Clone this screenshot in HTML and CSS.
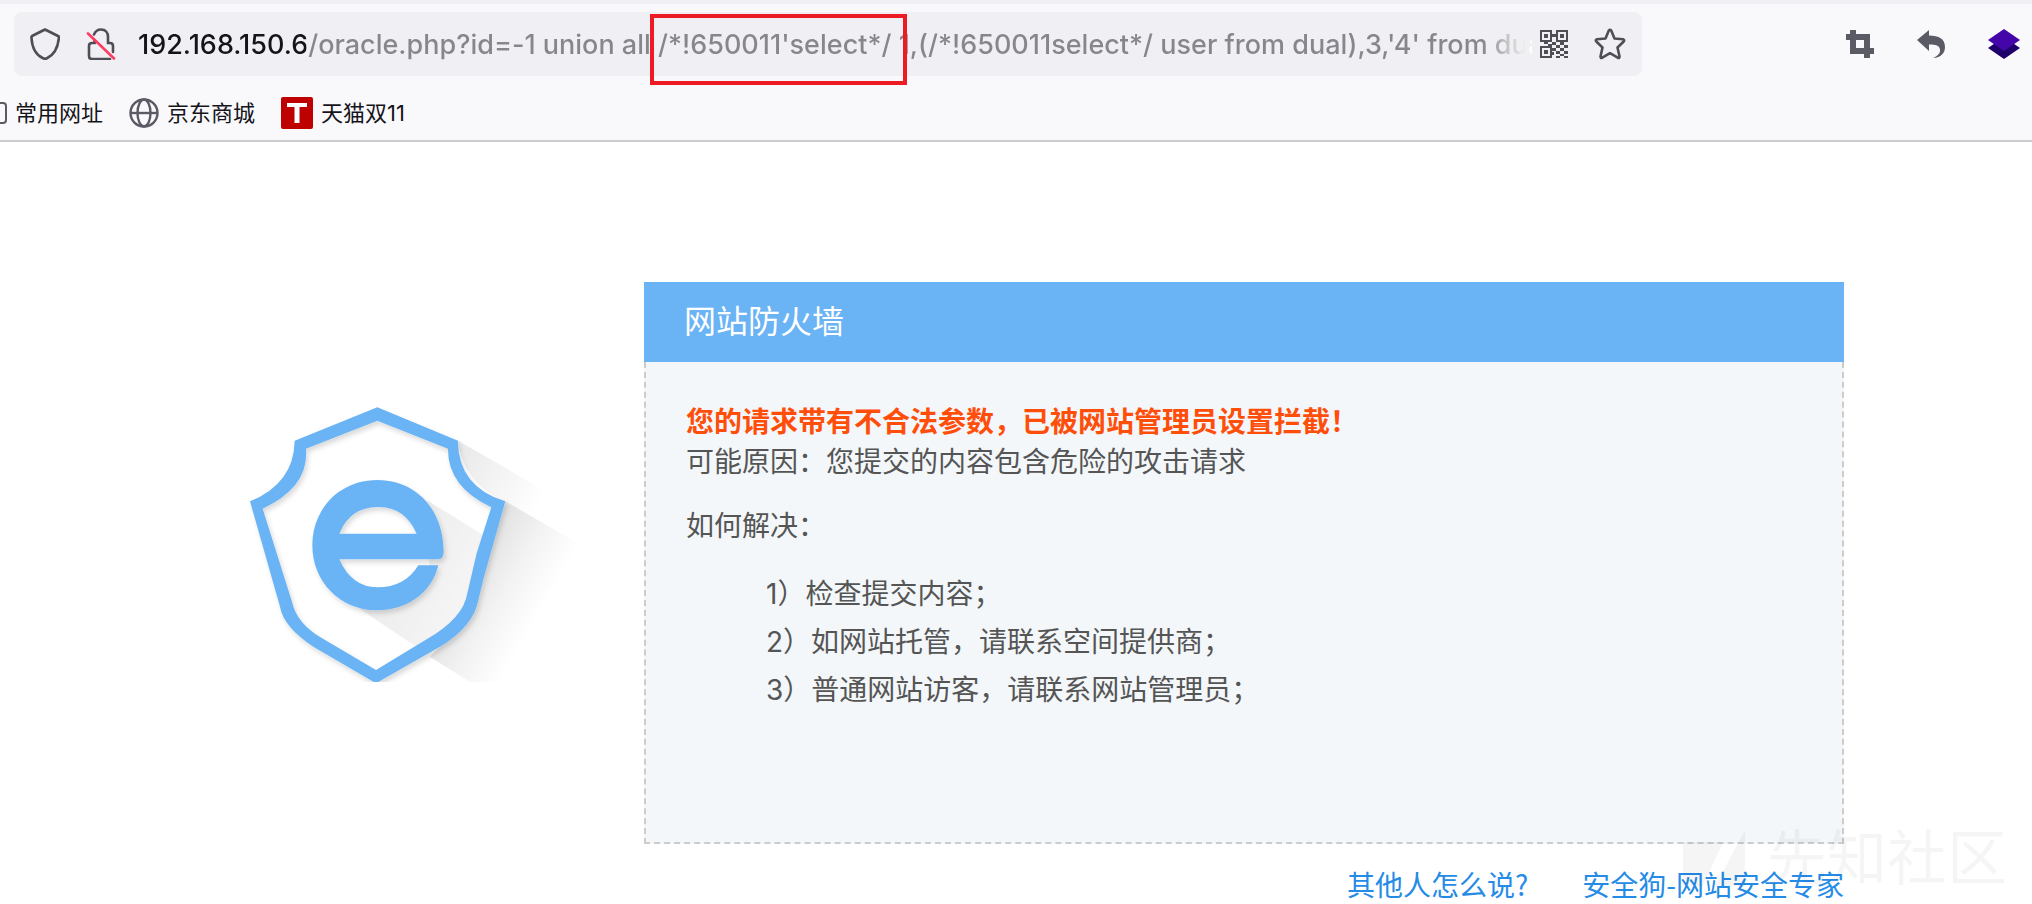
FILE: index.html
```html
<!DOCTYPE html>
<html lang="zh-CN">
<head>
    <meta charset="UTF-8">
    <meta name="viewport" content="width=device-width, initial-scale=1.0">
    <title>网站防火墙</title>
    <link rel="stylesheet" href="styles.css">
</head>
<body>
<header class="browser">
    <div class="toolbar">
        <div class="urlbar">
            <button class="icon-btn shield-btn" aria-label="Tracking protection">
                <svg width="30" height="32" viewBox="0 0 30 32" fill="none" stroke="#4f4e56" stroke-width="2.6" stroke-linejoin="round">
                    <path d="M15 1.5L28 8c1 0 .9 1 .9 2C28 19 24 27 17 30.300q-2 .9-4 0C6 27 2 19 1.500 10c0-1-.1-2 .5-2z"/>
                </svg>
            </button>
            <button class="icon-btn lock-btn" aria-label="Connection not secure">
                <svg width="30" height="32" viewBox="0 0 30 32" fill="none" stroke="#4f4e56" stroke-width="2.600" stroke-linecap="round">
                    <path d="M8 6.500C9.500 3 12 1.500 15 1.500c4.500 0 7 3 7 7.500v6h2c2 0 3 1 3 3v6M9 15H6c-2 0-3 1-3 3v10c0 2 1 3 3 3h18M8.500 12v3"/>
                    <path stroke="#ff3b62" d="M2 5.500l26 25"/>
                </svg>
            </button>
            <div class="url-field">
                <input type="text" class="url" aria-label="Address" value="192.168.150.6/oracle.php?id=-1 union all /*!650011'select*/ 1,(/*!650011select*/ user from dual),3,'4' from dual">
                <span class="highlight"></span>
            </div>
            <button class="icon-btn qr-btn" aria-label="QR code">
                <svg width="28" height="28" viewBox="0 0 28 28" fill="#4f4e56">
                    <path fill-rule="evenodd" d="M0 0h12v12H0zM2 2v8h8V2zM16 0h12v12H16zM18 2v8h8V2zM0 16h12v12H0zM2 18v8h8v-8z"/>
                    <path d="M4 4h4v4H4zM20 4h4v4h-4zM4 20h4v4H4zM12 4h4v3h-4zM4 12h4v2H4zM8 14h4v2H8zM12 12h4v3h-4zM16 15h4v3h-4zM20 12h4v3h-4zM24 15h4v3h-4zM12 18h4v3h-4zM20 18h4v3h-4zM16 21h4v3h-4zM24 21h4v3h-4zM12 22h2v3h-2zM16 26h4v2h-4zM20 24h4v2h-4zM24 26h4v2h-4z"/>
                </svg>
            </button>
            <button class="icon-btn star-btn" aria-label="Bookmark">
                <svg width="32" height="32" viewBox="0 0 32 32" fill="none" stroke="#4f4e56" stroke-width="2.6" stroke-linejoin="round">
                    <path d="M14.800 2.500q1.200-1.600 2.400 0L20.500 10.500l8.500.8q2 .6.700 2.200L23.500 19.500l2 9q0 2-1.800 1.200L16 25.200l-7.700 4.500q-1.800.8-1.800-1.200l2-9L2.300 13.500q-1.300-1.600.7-2.200l8.500-.8z"/>
                </svg>
            </button>
        </div>
        <div class="extensions">
            <button class="icon-btn" aria-label="Screenshot">
                <svg width="28" height="28" viewBox="0 0 28 28" fill="#5b5b66">
                    <path fill-rule="evenodd" d="M4 0h6v4h14v14h4v6h-4v4h-6v-4H4V10H0V4h4zM10 10v8h8v-8z"/>
                </svg>
            </button>
            <button class="icon-btn" aria-label="Undo">
                <svg width="28" height="28" viewBox="0 0 28 28" fill="#5b5b66">
                    <path d="M0 10L12 0v5.500C22 5.500 28 9 28 17c0 6-4 10.500-12 11 5-2 7.500-5 7-8.500-.6-4-4-5-11-5V21z"/>
                </svg>
            </button>
            <button class="icon-btn" aria-label="Layers">
                <svg width="32" height="30" viewBox="0 0 32 30">
                    <path fill="#20006b" d="M0 19L16 8l16 11-16 11z"/>
                    <path fill="#4406a8" d="M0 11L16 0l16 11-16 11z"/>
                </svg>
            </button>
        </div>
    </div>
    <nav class="bookmarks">
        <a href="#" class="bookmark">
            <svg width="7" height="24" viewBox="0 0 7 24" fill="none" stroke="#5b5b66" stroke-width="2">
                <path d="M0 2h3q3 0 3 3v14q0 3-3 3H0"/>
            </svg>
            常用网址
        </a>
        <a href="#" class="bookmark">
            <svg width="30" height="30" viewBox="0 0 30 30" fill="none" stroke="#5b5b66" stroke-width="2.400">
                <circle cx="15" cy="15" r="13.500"/>
                <ellipse cx="15" cy="15" rx="6.500" ry="13.500"/>
                <path d="M1 15h28"/>
            </svg>
            京东商城
        </a>
        <a href="#" class="bookmark">
            <svg width="32" height="32" viewBox="0 0 32 32">
                <rect width="32" height="32" rx="2" fill="#bf0000"/>
                <path fill="#fff" d="M6 6h20v4h-7.500v16h-5V10H6z"/>
            </svg>
            天猫双11
        </a>
    </nav>
</header>

<main class="container">
    <div class="logo">
        <svg width="380" height="282" viewBox="-12 60 1140 846">
            <defs>
                <linearGradient id="shadowTop" gradientUnits="userSpaceOnUse" x1="700" y1="240" x2="930" y2="372">
                    <stop offset="0" stop-color="#000" stop-opacity=".08"/>
                    <stop offset="1" stop-color="#000" stop-opacity="0"/>
                </linearGradient>
                <linearGradient id="shadowRight" gradientUnits="userSpaceOnUse" x1="780" y1="450" x2="1000" y2="577">
                    <stop offset="0" stop-color="#000" stop-opacity=".12"/>
                    <stop offset=".5" stop-color="#000" stop-opacity=".05"/>
                    <stop offset="1" stop-color="#000" stop-opacity="0"/>
                </linearGradient>
                <linearGradient id="shadowInner" gradientUnits="userSpaceOnUse" x1="420" y1="560" x2="760" y2="720">
                    <stop offset="0" stop-color="#000" stop-opacity=".08"/>
                    <stop offset="1" stop-color="#000" stop-opacity=".03"/>
                </linearGradient>
                <filter id="soft" x="-10%" y="-10%" width="120%" height="120%">
                    <feDropShadow dx="6" dy="10" stdDeviation="8" flood-color="#000" flood-opacity=".15"/>
                </filter>
            </defs>
            <path fill="url(#shadowTop)" d="M684 182L1140 444V545L826 364Q700 310 684 182z"/>
            <path fill="url(#shadowRight)" d="M826 364L1140 545V906H720L600 830L640 790Q730 720 745 640z"/>
            <path fill="url(#shadowInner)" d="M590 360L760 465L720 650Q700 730 570 808L380 680L600 600z"/>
            <g filter="url(#soft)">
                <path fill="#6ab3f5" fill-rule="evenodd" d="M442 82L684 182Q684 320 826 364L762 590L745 660Q730 740 630 800L438 910L250 800Q160 740 150 680L60 364Q192 310 194 182zM442 122L228 206Q238 320 98 386L186 665Q200 730 275 774L438 870L590 778Q700 715 712 640L740 520L784 382Q652 320 654 206z"/>
                <path fill="#6ab3f5" fill-rule="evenodd" d="M442 300C560 300 640 390 641 515Q641 538 622 538H328Q365 622 442 622Q525 622 565 556H625C605 640 530 691 440 691C330 691 247 605 247 496C247 385 330 300 442 300zM328 461H560Q525 381 445 381Q360 381 328 461z"/>
            </g>
        </svg>
    </div>
    <div class="content">
        <section class="panel">
            <h1>网站防火墙</h1>
            <div class="panel-body">
                <p class="warning">您的请求带有不合法参数，已被网站管理员设置拦截！</p>
                <p>可能原因：您提交的内容包含危险的攻击请求</p>
                <p class="solve">如何解决：</p>
                <ol class="steps">
                    <li>1）检查提交内容；</li>
                    <li>2）如网站托管，请联系空间提供商；</li>
                    <li>3）普通网站访客，请联系网站管理员；</li>
                </ol>
            </div>
        </section>
        <div class="links">
            <a href="#">其他人怎么说?</a>
            <a href="#">安全狗-网站安全专家</a>
        </div>
    </div>
</main>

<div class="watermark">
    <svg width="64" height="56" viewBox="0 0 64 56" fill="currentColor">
        <path d="M0 12h40L20 56H0zM62 0v56H32z"/>
    </svg>
    先知社区
</div>
</body>
</html>
```

FILE: styles.css
```css
* {
    box-sizing: border-box;
}
body {
    margin: 0;
    font-family: Inter, "Noto Sans CJK SC", sans-serif;
    background-color: #fff;
    color: #555;
    overflow: hidden;
}
.browser {
    border-top: 4px solid #f0f0f4;
    border-bottom: 2px solid #ccc;
    background-color: #f9f9fb;
}
.toolbar {
    display: flex;
    justify-content: space-between;
    padding: 8px 12px 0 14px;
}
.urlbar {
    display: flex;
    align-items: center;
    width: 1628px;
    height: 64px;
    padding: 0 16px;
    border-radius: 8px;
    background-color: #f0f0f4;
}
.icon-btn {
    display: flex;
    flex: none;
    padding: 0;
    border: none;
    background: none;
    cursor: pointer;
}
.lock-btn {
    margin: 0 22px 0 26px;
}
.url-field {
    position: relative;
    flex: 1;
    min-width: 0;
}
.url {
    display: block;
    width: 100%;
    height: 40px;
    padding: 0;
    border: none;
    outline: none;
    font-family: Inter, sans-serif;
    font-size: 27px;
    font-weight: 450;
    color: transparent;
    background-image: linear-gradient(to right, #15141a 168px, #87868c 168px, #87868c calc(100% - 50px), transparent);
    background-clip: text;
    -webkit-background-clip: text;
}
.highlight {
    position: absolute;
    top: -10px;
    left: 512px;
    width: 257px;
    height: 71px;
    border: 4px solid #ed1c24;
    pointer-events: none;
}
.qr-btn {
    margin: 0 26px 0 8px;
}
.extensions {
    display: flex;
    align-items: center;
    gap: 43px;
}
.bookmarks {
    display: flex;
    align-items: center;
    gap: 26px;
    height: 64px;
    padding-top: 10px;
}
.bookmark {
    display: flex;
    align-items: center;
    gap: 8px;
    font-size: 22px;
    line-height: 32px;
    color: #15141a;
    text-decoration: none;
}
.container {
    display: flex;
    max-width: 1656px;
    margin: 0 auto;
    padding-top: 140px;
}
.logo {
    display: flex;
    flex: 1;
    justify-content: center;
    align-items: flex-start;
    padding-top: 118px;
}
.content {
    width: 1200px;
}
h1 {
    margin: 0;
    padding: 0 40px;
    font-size: 32px;
    font-weight: normal;
    line-height: 80px;
    color: #fff;
    background-color: #6ab3f5;
}
.panel-body {
    min-height: 482px;
    padding: 40px;
    border: 2px dashed #ccc;
    border-top: none;
    background-color: #f3f7fa;
    font-size: 28px;
    line-height: 40px;
}
.panel-body p {
    margin: 0;
}
.panel-body .warning {
    font-weight: bold;
    color: #ff4e0a;
}
.panel-body .solve {
    margin-top: 24px;
}
.steps {
    margin: 24px 0 0;
    padding-left: 80px;
    list-style: none;
    line-height: 48px;
}
.links {
    display: flex;
    justify-content: flex-end;
    gap: 54px;
    padding-top: 20px;
    font-family: "Noto Sans CJK SC", sans-serif;
    font-size: 28px;
    line-height: 40px;
}
.links a {
    color: #258be6;
    text-decoration: none;
}
.watermark {
    position: fixed;
    right: 25px;
    bottom: 16px;
    display: flex;
    align-items: center;
    gap: 20px;
    font-size: 60px;
    line-height: 60px;
    color: rgba(0, 0, 0, 0.04);
    pointer-events: none;
}
```
